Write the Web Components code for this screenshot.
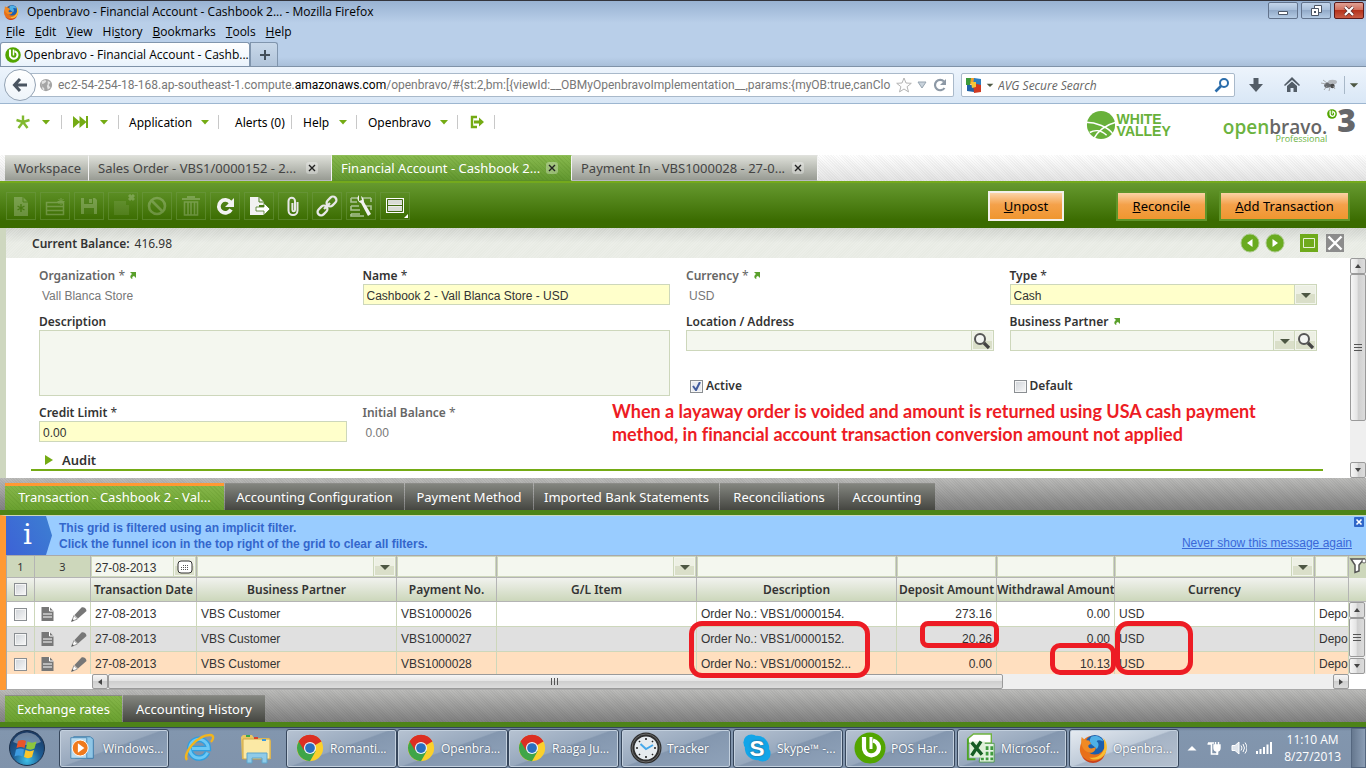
<!DOCTYPE html>
<html lang="en">
<head>
<meta charset="utf-8">
<title>Openbravo - Financial Account - Cashbook 2...</title>
<style>
html,body{margin:0;height:100%}
body{font-family:"Liberation Sans",Arial,sans-serif;font-size:12px;color:#333;background:#fff;
  --ui:"Noto Sans","Lucida Sans",sans-serif;--chrome:"Open Sans","Segoe UI",sans-serif;
  --line:#cdd7bb;--green:#74ab14}
</style>
</head>
<body>
<desktop-page></desktop-page>
<script>
function define(tag, css, html){
  customElements.define(tag, class extends HTMLElement{
    constructor(){
      super();
      const root=this.attachShadow({mode:'open'});
      const body=typeof html==='function'?html(this):html;
      root.innerHTML='<style>*{box-sizing:border-box}'+css+'</style>'+body;
    }
  });
}

/* ---------- icons ---------- */
const chromeLogo='<circle cx="16" cy="16" r="14" fill="#fbd02c"/><path d="M16 16 3.9 9A14 14 0 0 1 28.1 9Z" fill="#dc2f23"/><path d="M4 9A14 14 0 0 0 16 30l6-10.600-6-3.400Z" fill="#3fa548"/><path d="M16 9h12.200A14 14 0 0 0 3.900 9l6 10Z" fill="#dc2f23"/><circle cx="16" cy="16" r="6.500" fill="#eef3f8"/><circle cx="16" cy="16" r="5.200" fill="#2a6fc0"/>';
const foxLogo='<circle cx="16" cy="17" r="14" fill="#e8701a"/><path d="M4 24c5 7 17 9 24 0-2 5-7 8-12 8S6 29 4 24z" fill="#c9411c"/><circle cx="18" cy="12.500" r="10.500" fill="#1c5fae"/><path d="M14 4c5-2 11 0 13 5-3-1-6-2-7 0 3 2 2 6 0 8-2-3-6-4-7-7-1-2 0-4 1-6z" fill="#4fb0e6"/><path d="M4 4c1 2 4 4 8 4l2 4c-3 0-4 2-2 4 2 1 5 0 7-1 0 4-3 7-7 6C5 19 2 12 4 4z" fill="#f08a24"/><path d="M27 5c6 7 5 17-3 22-4 2-9 2-12-1 8 2 15-4 16-10 0-4 0-8-1-11z" fill="#f8bd33"/>';
const bravo='<circle cx="16" cy="16" r="15.500" fill="#52a500"/><path d="M10 5v10a7.500 7.500 0 1 0 9-6.500" fill="none" stroke="#fff" stroke-width="4.200"/><path d="M17 5v12" stroke="#fff" stroke-width="3" fill="none"/>';
const ICONS={
 fox:[32,foxLogo], chrome:[32,chromeLogo], bravo:[32,bravo],
 globe:[16,'<circle cx="8" cy="8" r="7" fill="#a5a5a5"/><path d="M3 4c2-1 4-2 5-1s-1 2-2 3-3 0-3 2 2 2 3 4-1 2-2 1M10 3l3 2-2 3 2 3-3 2-1-4 1-2z" fill="#e2e2e2"/>'],
 back:[16,'<path d="M8 2 2.500 8 8 14M3 8h12" fill="none" stroke="#4a5561" stroke-width="3"/>'],
 star:[16,'<path d="m8 1 2 5 5.300.300-4.200 3.400 1.400 5.200L8 12l-4.500 2.900 1.400-5.200L.700 6.300 6 6z" fill="#fdfdfd" stroke="#b3b3b3"/>'],
 tri:[10,'<path d="M1 2h8L5 8z" fill="#c9d3dc" stroke="#97a4b0"/>'],
 reload:[16,'<path d="M12.500 11a5.200 5.200 0 1 1-.5-6.500" fill="none" stroke="#8d99a6" stroke-width="2.200"/><path d="M14 2v6H8z" fill="#8d99a6"/>'],
 avg:[16,'<path d="M0 1h9l-1 6-8 1z" fill="#f0a030"/><path d="M0 1h5L4 8H0z" fill="#3c9a3a"/><path d="M8 1l7 1v6H7z" fill="#2d7fc0"/><path d="M1 8h7v7l-7-1z" fill="#1f62a8"/><path d="M7 6l8 2v7l-7 1z" fill="#cf3a22"/><path d="M5 5l5 0 0 5-4 1z" fill="#f6c838"/>'],
 search:[16,'<circle cx="10" cy="6" r="4" fill="none" stroke="#2b6dab" stroke-width="2"/><path d="m7 9-5.500 5.500" stroke="#2b6dab" stroke-width="2.600"/>'],
 down:[16,'<path d="M5.500 1h5v6H15l-7 8-7-8h4.500z" fill="#535d67"/>'],
 home:[16,'<path d="M8 0 0 8l1 1 7-6 7 6 1-1zM3 9l5-4.500L13 9v6H9.500v-4h-3v4H3z" fill="#535d67"/>'],
 fly:[18,'<ellipse cx="8" cy="9" rx="4" ry="2.600" fill="#66696d" transform="rotate(-20 8 9)"/><ellipse cx="12.500" cy="6" rx="4.500" ry="2.300" fill="#b4b8bd"/><circle cx="12.500" cy="10" r="2.200" fill="#4a4a4a"/><path d="M1 7l5 1M4 14l3-4M9 15l1-4M15 13l-2-3M3 4l4 3" stroke="#999" stroke-width=".8"/>'],
 spark:[16,'<path d="M8 8V1.500M8 8 1.500 6M8 8l6.500-2M8 8l-4.500 6M8 8l4.500 6" stroke="#82b930" stroke-width="2.400"/>'],
 ff:[16,'<path d="M0 2l7 6-7 6zM6.500 2l7 6-7 6zM13 2h2v12h-2z" fill="#74ab14"/>'],
 caret:[10,'<path d="M1 3h8L5 7.500z" fill="#74ab14"/>'],
 exit:[16,'<path d="M8 3H3v10h5" fill="none" stroke="#74ab14" stroke-width="2.400"/><path d="M5 6.500h5V3.500L15 8l-5 4.500v-3H5z" fill="#74ab14"/>'],
 doc:[24,'<path d="M5 3h9l5 5v14H5z" fill="#fff"/><path d="M14 3v5h5" fill="none" stroke="#4a7a1e"/><path d="M12 10v8M8.500 12l7 4M15.500 12l-7 4" stroke="#4a7a1e" stroke-width="1.400"/>'],
 rows:[24,'<path d="M3.500 8.500h17v12h-17zM3.500 12.500h17M3.500 16.500h17" fill="none" stroke="#fff" stroke-width="1.500"/><path d="M18 4v7M14.500 7.500h7M15.500 5l5 5M20.500 5l-5 5" stroke="#fff"/>'],
 save:[24,'<path d="M4 4h14l2 2v14H4z" fill="#fff"/><path d="M7 4h9v6H7zM7 14h10v6H7z" fill="#55812d"/><path d="M12 5h3v4h-3z" fill="#fff"/>'],
 savex:[24,'<path d="M3 7h12v4h3v10H3z" fill="#fff" opacity=".4"/><path d="m18 1 5 5M23 1l-5 5" stroke="#fff" stroke-width="3"/>'],
 no:[24,'<circle cx="12" cy="12" r="8" fill="none" stroke="#fff" stroke-width="2.600"/><path d="m6.500 6.500 11 11" stroke="#fff" stroke-width="2.600"/>'],
 trash:[24,'<path d="M3 5h18M9 5V3h6v2" fill="none" stroke="#fff" stroke-width="2"/><path d="M5.500 8h13v13h-13zM9 8v13M12 8v13M15.500 8v13" fill="none" stroke="#fff" stroke-width="1.600"/>'],
 refresh:[24,'<path d="M18 15.500a6.500 6.500 0 1 1-.5-7" fill="none" stroke="#f2f2f2" stroke-width="3.800"/><path d="M21 4v9h-9z" fill="#f2f2f2"/>'],
 export:[24,'<path d="M3 3h9l5 5v3h-5v6h5v4H3z" fill="#f2f2f2"/><path d="M12 3v5h5" fill="none" stroke="#4a7a1e"/><path d="M9 13h8V9l6 6-6 6v-4H9z" fill="#fff" stroke="#4a7a1e" stroke-width=".8"/>'],
 clip:[24,'<path d="M16.500 8v8.500a4.500 4.500 0 0 1-9 0V7a3.200 3.200 0 0 1 6.500 0v9a1.300 1.300 0 0 1-2.600 0V9" fill="none" stroke="#e8e8e8" stroke-width="2"/>'],
 link:[24,'<g fill="none" stroke="#e8e8e8" stroke-width="2.300"><rect x="2" y="13" width="11" height="7" rx="3.500" transform="rotate(-45 7.500 16.500)"/><rect x="11" y="4" width="11" height="7" rx="3.500" transform="rotate(-45 16.500 7.500)"/><path d="m9 15 6-6"/></g>'],
 wrench:[24,'<path d="M2 4h7M14 4h8M2 4v4h6M22 4v4M2 12h8M2 12v4h9M17 12h5v4M2 20h9M2 20v2h13" fill="none" stroke="#a9c294" stroke-width="1.600"/><path d="M10 1c-3 3-1 7 2 8l7 13 3-2-7-12c0-3-1-5-3-6l1 4-3 1z" fill="#f2f2f2"/>'],
 form:[24,'<path d="M3 4h18v15H3z" fill="#fff"/><path d="M5 6h14v4.500H5zM5 12.500h14V17H5z" fill="#d9dcd6"/><path d="M4.500 5.500h15v12h-15zM4.500 11.500h15" fill="none" stroke="#40690f"/>'],
 goto:[9,'<path d="M2 1h6v6L6 5C4 5.500 4 7 4.500 8 2 7.500 1.500 5 4 3z" fill="#5aa02c"/>'],
 lens:[20,'<circle cx="8" cy="8" r="5" fill="#f3f5f2" stroke="#555" stroke-width="2"/><path d="m12 12 5 5" stroke="#444" stroke-width="3.200"/>'],
 pick:[12,'<path d="M1 4h10L6 9z" fill="#4d5743"/>'],
 prev:[20,'<circle cx="10" cy="10" r="9" fill="#6aab20" stroke="#a9c98a"/><path d="M12.500 6v8L7 10z" fill="#fff"/>'],
 next:[20,'<circle cx="10" cy="10" r="9" fill="#6aab20" stroke="#a9c98a"/><path d="M7.500 6v8l5.500-4z" fill="#fff"/>'],
 max:[18,'<path d="M0 0h18v18H0z" fill="#6faa1b"/><path d="M3.500 4.500h11v9h-11z" fill="none" stroke="#e6f0d6"/>'],
 close:[18,'<path d="M0 0h18v18H0z" fill="#8c8c8c"/><path d="m2.500 2.500 13 13M15.500 2.500l-13 13" stroke="#fff" stroke-width="2.400"/>'],
 audit:[10,'<path d="M1 0l8 5-8 5z" fill="#74ab14"/>'],
 cal:[16,'<rect x="1" y="2" width="14" height="12" rx="3" fill="#fff" stroke="#333"/><path d="M4 10.500h8M4 8.500h8M6 6.500h6" stroke="#555" stroke-dasharray="1 1"/>'],
 funnel:[18,'<path d="M2 3h13l-5 6v6l-4 1.500V9z" fill="#fff" stroke="#555" stroke-width="1.500"/><circle cx="15" cy="5" r="2" fill="#fff" stroke="#666"/>'],
 page:[16,'<path d="M1.500 1h8l4 4v10h-12z" fill="#777"/><path d="M9.500 1v4h4M3 8h9M3 11h9" stroke="#fff" fill="none"/>'],
 pencil:[18,'<path d="M11.500 2.500c2-1 5 1 5 3.500L8 13.500 4.500 10z" fill="#777"/><path d="M4 10.500 1.500 16.500l6-2.500z" fill="#fff" stroke="#999"/><path d="m1.500 16.500 1-2.500 1.500 1.500z" fill="#555"/>'],
 media:[32,'<path d="M8 5h19v22H8z" fill="#63a8d4"/><path d="M6 4h18l3 3v20H8z" fill="#8fc6e6" stroke="#3f7ba8"/><path d="M3 5h17v22H3z" fill="#b9dcf0" stroke="#4c8ab5"/><circle cx="13" cy="16" r="8.500" fill="#ef7a1c" stroke="#fff"/><path d="M10.500 11v10l7-5z" fill="#fff"/>'],
 ie:[32,'<path d="M24.500 20.500a9.300 9.300 0 1 1 .8-4H9" fill="none" stroke="#2f9fe0" stroke-width="5.600"/><path d="M24.500 20.500a9.300 9.300 0 1 1 .8-4H9" fill="none" stroke="#6cc8f5" stroke-width="3"/><path d="M4 28C-1 22 14 3 27 3c5 0 3 5 1 7" fill="none" stroke="#f2b51d" stroke-width="2.400"/>'],
 folder:[32,'<path d="M1 5l2-2h9l2 3h15l2 3v18H2z" fill="#e9c763"/><path d="M3 7h27v20H3z" fill="#fbe9a5" stroke="#cfa646"/><path d="M6 3h4v2H6z" fill="#3aa84a"/><path d="M14 5h4v2h-4z" fill="#d9432c"/><path d="M22 7h4v2h-4z" fill="#3b9ae0"/><path d="M7 31V21h20v10h-5v-5H12v5z" fill="#8fcbe8" stroke="#5fa6cc"/>'],
 tracker:[32,'<circle cx="16" cy="16" r="15.500" fill="#2f2f2f"/><circle cx="16" cy="16" r="14" fill="none" stroke="#6a6a6a"/><circle cx="16" cy="16" r="11.500" fill="#e6ebef"/><path d="m10.500 12 5.500 5 7-4" fill="none" stroke="#46a8ea" stroke-width="2"/><path d="M16 6v2M16 24v2M6 16h2M24 16h2M9 9l1 1M22 22l1 1M9 23l1-1M22 10l1-1" stroke="#222" stroke-width="1.600"/>'],
 skype:[32,'<circle cx="10" cy="10" r="8.500" fill="#12a5e8"/><circle cx="22" cy="22" r="8.500" fill="#12a5e8"/><circle cx="16" cy="16" r="13" fill="#12a5e8"/><text x="16" y="24.500" font-family="Liberation Sans" font-weight="700" font-size="24" text-anchor="middle" fill="#fff">S</text>'],
 excel:[32,'<path d="M2 6l6-5h19v10H2z" fill="#fff" stroke="#6fb43f" stroke-width="1.500"/><path d="M2 6v22l8 0" fill="none" stroke="#4da528" stroke-width="2"/><path d="M18 11h12v20H14z" fill="#e6f3e3" stroke="#4d9a4a"/><path d="M21 14h3v4h-3zM26 14h3v4h-3zM21 20h3v4h-3zM26 20h3v4h-3zM16 26h3v3h-3zM21 26h3v3h-3zM26 26h3v3h-3z" fill="#3f9a3e"/><path d="M4 9h16v17H4z" fill="#dff0d8"/><path d="m6 10 11 13M16 9 6 24" stroke="#165c24" stroke-width="3.600"/>'],
 orb:[38,'<defs><radialGradient id="o" cx=".5" cy=".85" r=".8"><stop offset="0" stop-color="#3fc0e8"/><stop offset=".5" stop-color="#1d5c94"/><stop offset="1" stop-color="#1b3a63"/></radialGradient></defs><circle cx="19" cy="19" r="17.500" fill="url(#o)" stroke="#1b2f4a"/><path d="M5 13a15 15 0 0 1 28 0c-8 4-20 4-28 0z" fill="#fff" opacity=".35"/><path d="M10 12c3-1.500 6-1.500 8 0l-1.500 7c-2.500-1.500-5-1.500-8 0z" fill="#e9552a"/><path d="M19.500 12.500c3 1.500 6 1.500 9 0l-2 7c-2.500 1.500-5.500 1.500-8.500 0z" fill="#8cc63e"/><path d="M8 20.500c3-1.500 5.500-1.500 8 0l-1.500 7c-2.500-1.500-5.500-1.500-8 0z" fill="#3e9be0"/><path d="M17.500 21c3 1.500 6 1.500 8.500 0l-2 7c-2.500 1.500-5.500 1.500-8 0z" fill="#fbc62b"/>'],
 up:[10,'<path d="M5 3l4.500 4.500h-9z" fill="#fff"/>'],
 plug:[16,'<path d="M2 3h6M1.500 4h4v10h6v-3" fill="none" stroke="#fff" stroke-width="1.600"/><path d="M8 5h6v3c0 2-1 3-3 3s-3-1-3-3zM9.500 2v3M12.500 2v3M11 11v4" fill="#fff" stroke="#fff" stroke-width="1.400"/>'],
 vol:[16,'<path d="M1 5.500h3L8 2v12l-4-3.500H1z" fill="#dfe5ec" stroke="#fff"/><path d="M10 5.500q2 2.500 0 5M12 4q3 4 0 8M14 2.500q4 5.500 0 11" fill="none" stroke="#fff"/>'],
 signal:[16,'<path d="M0 11h2v3H0zM3.500 9h2v5h-2zM7 7h2v7H7zM10.500 4.500h2V14h-2zM14 2h2v12h-2z" fill="#fff"/>'],
 valley:[32,'<circle cx="16" cy="16" r="15" fill="#68b13a"/><path d="M0 13C10 13 24 18 29 26M8 31C13 22 20 16 32 13M4 24c5-3 12-3 18 3" fill="none" stroke="#fff" stroke-width="1.600"/>'],
 arL:[8,'<path d="M6 1v6L2 4z" fill="#444"/>'],arR:[8,'<path d="M2 1v6l4-3z" fill="#444"/>'],
 arU:[8,'<path d="M1 6h6L4 2z" fill="#444"/>'],arD:[8,'<path d="M1 2h6L4 6z" fill="#444"/>'],
 min:[14,'<path d="M2.500 7.500h9v3h-9z" fill="#fff" stroke="#4c5666"/>'],
 rest:[14,'<path d="M5.500 1.500h7v7h-7z" fill="#fff" stroke="#4c5666"/><path d="M2.500 4.500h7v7h-7z" fill="#fff" stroke="#4c5666"/><path d="M5 7h2v2H5z" fill="#4c5666"/>'],
 x:[14,'<path d="m3 3 8 8M11 3l-8 8" stroke="#5a2a2a" stroke-width="3.600"/><path d="m3 3 8 8M11 3l-8 8" stroke="#fff" stroke-width="2.200"/>'],
 xs:[8,'<path d="m1 1 6 6M7 1 1 7" stroke="#222" stroke-width="1.400"/>'],
 xb:[10,'<rect width="10" height="10" rx="1" fill="#2f66c8"/><path d="m2.500 2.500 5 5M7.500 2.500l-5 5" stroke="#fff" stroke-width="1.600"/>'],
 plus:[12,'<path d="M6 1v10M1 6h10" stroke="#444f5a" stroke-width="2"/>']
};
define('ui-icon',':host{display:inline-flex;flex:none}svg{display:block}',
 el=>{const [n,p]=ICONS[el.getAttribute('name')];const s=el.getAttribute('size')||n;
  return `<svg width="${s}" height="${s}" viewBox="0 0 ${n} ${n}" aria-hidden="true">${p}</svg>`;});
const ic=(n,s)=>`<ui-icon name="${n}"${s?` size="${s}"`:''}></ui-icon>`;

/* ---------- browser window ---------- */
define('win-chrome',`
:host{display:block;height:67px;font-family:var(--chrome);color:#000;border-top:1px solid #33343c;border-bottom:1px solid #7f92a8;
 background:linear-gradient(#98b2d2,#b9cfe9 22px,#b9cfe9 56px,#a9bfd9)}
header{display:flex;height:21px;align-items:center;padding-left:3px}
h1{font:12px/20px var(--chrome);margin:0 0 0 8px;flex:1}
.wb{display:flex;gap:3px;padding-right:2px;align-self:flex-start}
.wb button{width:30px;height:17px;padding:0;border:1px solid #62738c;border-radius:2px;margin-top:1px;display:flex;align-items:center;justify-content:center;
 background:linear-gradient(#c3d5ea,#a5bcd8 50%,#93abc9 50%,#b4cbe4)}
.wb .c{background:linear-gradient(#e0a195,#cf6a57 50%,#b5321b 50%,#c95c45);border-color:#5c1a1a}
nav{display:flex;gap:10px;padding-left:6px;height:20px}
nav a{font:12px/20px var(--chrome);color:#000;text-decoration:none}
.t{display:flex;height:24px}
.tab{display:flex;align-items:center;width:250px;gap:3px;padding:0 4px;background:linear-gradient(#fff,#e9f2fb);border:1px solid #8095ad;border-bottom:0;border-radius:3px 3px 0 0;overflow:hidden;white-space:nowrap}
.new{width:28px;padding:0 0 0 1px;display:flex;align-items:center;justify-content:center;border:1px solid #8095ad;border-bottom:0;border-radius:0 3px 0 0;background:linear-gradient(#c8d8e9,#b1c4da)}
`,`<header>${ic('fox',16)}<h1>Openbravo - Financial Account - Cashbook 2... - Mozilla Firefox</h1>
<div class="wb"><button aria-label="Minimize">${ic('min')}</button><button aria-label="Restore">${ic('rest')}</button><button class="c" aria-label="Close">${ic('x')}</button></div></header>
<nav><a href="#"><u>F</u>ile</a><a href="#"><u>E</u>dit</a><a href="#"><u>V</u>iew</a><a href="#">Hi<u>s</u>tory</a><a href="#"><u>B</u>ookmarks</a><a href="#"><u>T</u>ools</a><a href="#"><u>H</u>elp</a></nav>
<div class="t"><div class="tab">${ic('bravo',16)}<span>Openbravo - Financial Account - Cashb...</span></div><button class="new" aria-label="New tab">${ic('plus')}</button></div>`);

define('win-nav',`
:host{display:flex;height:37px;align-items:center;background:linear-gradient(#edf4fc,#d9e7f6);border-bottom:1px solid #9db6d0;padding:0 7px 0 4px;font:12px var(--chrome)}
.back{width:32px;height:32px;padding:0;border-radius:50%;border:1px solid #93a2b3;background:linear-gradient(#fff,#eef4fa);display:flex;align-items:center;justify-content:center;z-index:1;flex:none}
.url,.s{display:flex;align-items:center;height:24px;background:#fff;border:1px solid #a9b9ca;border-radius:2px}
.url{flex:1;margin-left:-7px;padding:0 5px 0 10px;gap:5px;min-width:0;color:#777;border-left:0}
.u{flex:1;overflow:hidden;white-space:nowrap;font:12px/20px Roboto,sans-serif}.u b{font-weight:400;color:#000}
.s{width:274px;margin:0 13px 0 7px;padding:0 4px;gap:4px;flex:none}
.s input{border:0;outline:0;flex:1;min-width:0;font:italic 12px var(--chrome);padding:0;background:none}
.s input::placeholder{color:#666;opacity:1}
.i{display:flex;gap:20px;align-items:center}
.v{width:1px;height:18px;background:#a8b8c8;margin:0 4px 0 6px}
`,`<button class="back" aria-label="Back">${ic('back')}</button>
<div class="url">${ic('globe',14)}<div class="u">ec2-54-254-18-168.ap-southeast-1.compute.<b>amazonaws.com</b>/openbravo/#{st:2,bm:[{viewId:__OBMyOpenbravoImplementation__,params:{myOB:true,canClo</div>${ic('star')}${ic('tri')}${ic('reload')}</div>
<div class="s">${ic('avg')}${ic('pick',8)}<input placeholder="AVG Secure Search" aria-label="Search">${ic('search')}</div>
<div class="i">${ic('down')}${ic('home')}${ic('fly')}</div><div class="v"></div>${ic('pick',10)}`);

/* ---------- application header ---------- */
define('ob-header',`
:host{display:flex;height:51px;background:#fff;padding-right:10px;color:#000;font:12px var(--ui)}
nav{display:flex;flex:1;align-self:flex-start;padding-top:11px}
a{display:flex;align-items:center;height:14px;color:#000;text-decoration:none;padding-left:11px;border-right:1px solid #c8c8c8;justify-content:space-between;padding-right:8px;white-space:nowrap}
.a{width:62px;padding-left:15px;padding-right:10px}.b{width:57px;padding-right:9px}.c{width:100px;padding-left:10px}.d{width:73px;padding-left:16px}.e{width:65px}.f{width:101px}.g{width:37px}
.w{display:flex;gap:1px;font:700 14px/12px "Liberation Sans",sans-serif;color:#68b13a;padding-top:6px;margin-right:52px}
.w p{margin:3px 0 0}
.o{display:grid;grid-template-columns:auto auto;align-content:start;color:#6cb33f}
.o .n{font:600 19px/22px "Open Sans",sans-serif;padding-top:12px}.o .n b{font-weight:600;color:#666}
.o .t{font:800 32px/32px "Open Sans",sans-serif;color:#66676a;display:flex;align-items:flex-start}
.t ui-icon{padding-top:5px}
.o .p{font:9px/10px "Open Sans",sans-serif;text-align:right;margin-top:-4px}
`,`<nav><a class="a" href="#" aria-label="Create new">${ic('spark')}${ic('caret')}</a><a class="b" href="#" aria-label="Quick launch">${ic('ff')}${ic('caret')}</a><a class="c" href="#">Application ${ic('caret')}</a><a class="d" href="#">Alerts (0)</a><a class="e" href="#">Help ${ic('caret')}</a><a class="f" href="#">Openbravo ${ic('caret')}</a><a class="g" href="#" aria-label="Log out">${ic('exit')}</a></nav>
<div class="w">${ic('valley',30)}<p>WHITE<br>VALLEY</p></div>
<div class="o"><div class="n">open<b>bravo.</b></div><div class="t">${ic('bravo',10)}3</div><div class="p">Professional</div></div>`);

define('ob-tab',`
:host{display:flex;align-items:center;height:26px;padding:0 13px 0 9px;font:13px var(--ui);color:#444;border-right:1px solid #f4f4f4;border-top:1px solid #e0e1dd;border-bottom:1px solid #b8b8c4;
 background:linear-gradient(#dddfd8,#989b93);white-space:nowrap;justify-content:space-between}
:host([active]){color:#fff;border-top-color:#8fbe5a;border-bottom-color:#5c8f2a;background:repeating-linear-gradient(45deg,#0000 0 2px,#3b6b0a1c 2px 3px),linear-gradient(#88b94e,#61962f)}
button{border:0;width:12px;height:12px;padding:0;display:flex;align-items:center;justify-content:center;border-radius:3px;background:#ffffff50}
`,el=>`<slot></slot>${el.hasAttribute('closable')?`<button aria-label="Close tab">${ic('xs')}</button>`:''}`);

define('ob-tabs',`:host{display:flex;height:26px;padding-left:5px;background:repeating-linear-gradient(45deg,#fff0 0 1px,#00000009 1px 2px),linear-gradient(#fff,#e4e4e4)}
.w{width:84px}.s{width:243px}.f{width:240px}.p{width:246px}`,
`<ob-tab class="w">Workspace</ob-tab><ob-tab class="s" closable>Sales Order - VBS1/0000152 - 2...</ob-tab><ob-tab class="f" active closable>Financial Account - Cashbook 2...</ob-tab><ob-tab class="p" closable>Payment In - VBS1000028 - 27-0...</ob-tab>`);

define('ob-toolbar',`
:host{display:flex;align-items:center;height:47px;border-top:2px solid #74a91c;padding:0 16px 0 6px;background:linear-gradient(#66992f,#3a6b00 85%)}
.i{display:flex;gap:4px;flex:1}
.i button{width:30px;height:28px;padding:0;border:1px solid #6f9a4880;background:none;display:flex;align-items:center;justify-content:center;position:relative}
.i button[disabled] ui-icon{opacity:.22}
.m::after{content:"";position:absolute;right:1px;bottom:1px;border:2px solid #fff;border-left-color:#0000;border-top-color:#0000}
.b{height:30px;border:2px solid #5f952a;font:13px var(--ui);color:#000;background:linear-gradient(#fbd3a6,#f4a14a 45%,#ef962f);padding:0;margin-left:12px}
.u{width:76px;border-color:#f3f0ea}.r{width:91px;margin-left:52px}.a{width:131px}
`,`<div class="i">${['doc','rows','save','savex','no','trash'].map(n=>`<button disabled aria-label="${n}">${ic(n)}</button>`).join('')}${['refresh','export','clip','link','wrench'].map(n=>`<button aria-label="${n}">${ic(n)}</button>`).join('')}<button class="m" aria-label="form">${ic('form')}</button></div>
<button class="b u"><u>U</u>npost</button><button class="b r"><u>R</u>econcile</button><button class="b a"><u>A</u>dd Transaction</button>`);

define('ob-status',`
:host{display:flex;align-items:center;height:30px;padding:0 22px 0 26px;font:12px var(--ui);gap:5px;background:repeating-linear-gradient(135deg,#0000 0 1px,#ffffff28 1px 2px),linear-gradient(#cfd2cd,#e8ebe4 50%)}
b{font-weight:600}span{flex:1}button{border:0;padding:0;background:none;display:flex}
.m{margin:0 3px 0 10px}
`,`<b>Current Balance:</b><span>416.98</span><button aria-label="Previous">${ic('prev')}</button><button aria-label="Next">${ic('next')}</button><button class="m" aria-label="Maximize">${ic('max')}</button><button aria-label="Close">${ic('close')}</button>`);

/* ---------- scrollbar ---------- */
define('ob-scroll',`
:host{display:flex;flex-direction:column;background:#efefef}
:host([dir-x]){flex-direction:row}
button,.t{border:1px solid #9a9a9a;border-radius:2px;background:linear-gradient(90deg,#f6f6f6,#e4e4e4 45%,#cfcfcf 50%,#dcdcdc);padding:0;display:flex;align-items:center;justify-content:center;flex:none;width:16px;height:16px}
:host([dir-x]) button,:host([dir-x]) .t{height:15px;background:linear-gradient(#f6f6f6,#e4e4e4 45%,#cfcfcf 50%,#dcdcdc)}
.t{height:auto;flex:var(--thumb)}.r{flex:var(--rest)}
:host([dir-x]) .t{width:auto}
.g{width:8px;height:7px;background:repeating-linear-gradient(#555 0 1px,#0000 1px 3px)}
:host([dir-x]) .g{background:repeating-linear-gradient(90deg,#555 0 1px,#0000 1px 3px)}
`,el=>{const x=el.hasAttribute('dir-x');return `<button aria-label="Back">${ic(x?'arL':'arU')}</button><div class="t"><div class="g"></div></div><div class="r"></div><button aria-label="Forward">${ic(x?'arR':'arD')}</button>`;});

/* ---------- form ---------- */
define('ob-field',`
:host{display:block}
label{display:block;font:600 12px/16px var(--ui);color:#333;white-space:nowrap}
label i{font-style:normal;font-weight:400}
:host([kind=read]) label{color:#666}
.b{display:flex;height:21px;border:1px solid var(--line);background:#f4f7ef}
:host([req]) .b{background:#ffffcb}
input,select,textarea{font:12px "Liberation Sans",sans-serif;color:#333;border:0;outline:0;background:none;padding:2px 3px 0;flex:1;min-width:0;appearance:none;resize:none;border-radius:0}
.b button{width:21px;border:1px solid #f2f5ec;outline:1px solid var(--line);background:linear-gradient(#edf0e4 50%,#dadfc9 50%);padding:0;display:flex;align-items:center;justify-content:center;flex:none}
:host([kind=area]) .b{height:66px}
output{display:block;font:12px/22px "Liberation Sans",sans-serif;color:#777;padding:1px 3px 0;height:21px}
`,el=>{const k=el.getAttribute('kind'),v=el.getAttribute('value')||'';
 const l=`<label for="f">${el.getAttribute('label')}${el.hasAttribute('star')?' <i>*</i>':''}${el.hasAttribute('go')?' '+ic('goto'):''}</label>`;
 if(k==='read')return l+`<output id="f">${v}</output>`;
 if(k==='area')return l+`<div class="b"><textarea id="f"></textarea></div>`;
 if(k==='select')return l+`<div class="b"><select id="f"><option>${v}</option></select><button aria-label="Open list">${ic('pick')}</button></div>`;
 const bt=(k==='combo'?`<button aria-label="Open list">${ic('pick')}</button>`:'')+(k==='combo'||k==='find'?`<button aria-label="Find">${ic('lens')}</button>`:'');
 return l+`<div class="b"><input id="f" value="${v}">${bt}</div>`;});

const CHECK=`input[type=checkbox]{appearance:none;width:13px;height:13px;margin:0;border:1px solid #8a8e92;background:linear-gradient(135deg,#cfd3d8,#f8f8f8);box-shadow:inset 0 0 0 1px #f6f6f6;flex:none}
input[type=checkbox]:checked{background:url("data:image/svg+xml,%3Csvg xmlns='http://www.w3.org/2000/svg' width='11' height='11'%3E%3Cpath d='M2 5l3 4 4-8' fill='none' stroke='%23405a9c' stroke-width='2'/%3E%3C/svg%3E"),#e8ebf0}`;
define('ob-check',`:host{display:flex;align-items:center;height:21px;margin-top:15px;padding-left:4px}${CHECK}
label{display:flex;gap:3px;font:600 12px/16px var(--ui)}input{margin-top:2px!important}`,
 el=>`<label><input type="checkbox"${el.hasAttribute('on')?' checked':''}><slot></slot></label>`);

define('ob-form',`
:host{display:flex;background:#fff;overflow:hidden;position:relative;min-height:0}
.m{flex:1;padding:10px 27px 0 25px}
.g{display:grid;grid-template-columns:repeat(4,1fr);gap:9px 16px;padding:0 6px 0 8px}
.w{grid-column:span 2;grid-row:span 2}
h2{display:flex;align-items:center;gap:8px;font:600 13px/18px var(--ui);margin:9px 0 0;padding-left:13px;border-bottom:2px solid var(--green)}
p{position:absolute;left:606px;top:142px;margin:0;font:700 18px/23px Lato,Calibri,sans-serif;font-variant-ligatures:none;color:#ed1c24;white-space:nowrap}
ob-scroll{width:16px;--thumb:157;--rest:44}
`,`<div class="m"><div class="g">
<ob-field kind="read" label="Organization" star go value="Vall Blanca Store"></ob-field>
<ob-field kind="text" label="Name" star req value="Cashbook 2 - Vall Blanca Store - USD"></ob-field>
<ob-field kind="read" label="Currency" star go value="USD"></ob-field>
<ob-field kind="select" label="Type" star req value="Cash"></ob-field>
<ob-field class="w" kind="area" label="Description"></ob-field>
<ob-field kind="find" label="Location / Address"></ob-field>
<ob-field kind="combo" label="Business Partner" go></ob-field>
<ob-check on>Active</ob-check><ob-check>Default</ob-check>
<ob-field kind="text" label="Credit Limit" star req value="0.00"></ob-field>
<ob-field kind="read" label="Initial Balance" star value="0.00"></ob-field>
</div><h2>${ic('audit')}Audit</h2></div><ob-scroll></ob-scroll>
<p>When a layaway order is voided and amount is returned using USA cash payment<br>method, in financial account transaction conversion amount not applied</p>`);

/* ---------- child tabs ---------- */
define('ob-subtabs',`
:host{display:flex;height:37px;padding:5px 0 0 5px;gap:1px;align-items:flex-start;border-bottom:5px solid #4d8318;
 background:repeating-linear-gradient(45deg,#0000 0 1px,#0000000c 1px 2px),linear-gradient(#bcbcba,#808080)}
::slotted(a){height:27px;font:13px/22px var(--ui);color:#fff;text-decoration:none;padding:2px 10px 0;text-align:center;white-space:nowrap;box-sizing:border-box;background:linear-gradient(#83857f,#454641);border-top:1px solid #8c8c88;flex:none}
::slotted(a.on){background:repeating-linear-gradient(45deg,#0000 0 2px,#3b6b0a1c 2px 3px),linear-gradient(#86b64a,#69a02f)}
::slotted(a.top){border-top:3px solid #ff9933;padding-top:0}
`,'<slot></slot>');

define('ob-message',`
:host{display:flex;height:40px;background:#9cf;border-top:1px solid var(--line);color:#3366cc;border-left:6px solid #ff9933}
.i{width:46px;background:linear-gradient(60deg,#3d62d6,#3c7fd2);clip-path:polygon(0 0,40px 0,100% 50%,40px 100%,0 100%);color:#fff;font:28px/38px "DejaVu Serif",serif;padding-left:17px}
p{flex:1;margin:0;padding:4px 0 0 7px;font-weight:700;line-height:16px}
.r{display:flex;flex-direction:column;align-items:flex-end;justify-content:space-between;padding:1px 2px 4px 0}
a{color:#3a68d8;line-height:15px;padding-right:12px}button{border:0;padding:0;background:none;display:flex}
`,`<div class="i">i</div><p>This grid is filtered using an implicit filter.<br>Click the funnel icon in the top right of the grid to clear all filters.</p><div class="r"><button aria-label="Close message">${ic('xb')}</button><a href="#">Never show this message again</a></div>`);

/* ---------- grid ---------- */
const rows=[['VBS1000026','Order No.: VBS1/0000154.','273.16','0.00'],['VBS1000027','Order No.: VBS1/0000152.','20.26','0.00'],['VBS1000028','Order No.: VBS1/0000152...','0.00','10.13']];
const flt=(k,v='')=>`<td><div class="f"><input aria-label="${k}" value="${v}">${k==='Transaction Date'?`<button aria-label="Calendar">${ic('cal')}</button>`:/Partner|Item|Currency/.test(k)?`<button aria-label="List">${ic('pick')}</button>`:''}</div></td>`;
define('ob-grid',`${CHECK}
:host{display:block;position:relative;border-left:6px solid #ff9933;background:#fff}
.box{border:1px solid #a9a9a9;border-right:0}
.top{display:flex;height:118px;overflow:hidden}
.tw{flex:1;overflow:hidden;min-width:0}
table{border-collapse:separate;border-spacing:0;table-layout:fixed;width:100%}
td,th{padding:0 4px;border-right:1px solid var(--line);border-bottom:1px solid var(--line);font-size:12px;text-align:left;overflow:hidden;white-space:nowrap;height:25px;font-weight:400}
tr.x td{padding:0;height:22px;border-color:#b4b4b4;background:var(--line);text-align:center;font-family:var(--ui);font-size:11px}
tr.h th{height:24px;padding:0 0 1px;text-align:center;font:600 12px var(--ui);border-color:#b4b4b4;background:linear-gradient(#f1f2ee,#ccd7bb)}
tr.b td{background:#e0e0e0}tr.c td{background:#ffdfbf}
.f{display:flex;height:21px;border:1px solid var(--line);background:#f4f7ef}
.f input{border:0;outline:0;background:none;min-width:0;flex:1;padding:2px 3px 0;font:12px "Liberation Sans",sans-serif;color:#333}
.f button{width:21px;border:1px solid #f2f5ec;outline:1px solid var(--line);background:linear-gradient(#edf0e4 50%,#dadfc9 50%);padding:0;display:flex;align-items:center;justify-content:center}
.n{text-align:right}.k input{display:block;margin:0 3px}tr.h input{margin:0 7px!important;display:block}
.e{display:flex;align-items:center;gap:7px;padding-left:1px}.e hr{width:1px;height:11px;border:0;background:#c5d3ae;margin:0}
.s{width:17px;display:flex;flex-direction:column;background:#fff}
.s div{height:22px;background:var(--line)}.s div+div{height:24px;background:linear-gradient(#f1f2ee,#ccd7bb);border-bottom:1px solid #b4b4b4}
.s ob-scroll{flex:1;--thumb:37;--rest:1}
.hs{display:flex;padding:0 17px 0 85px}.hs ob-scroll{flex:1;height:15px;--thumb:894;--rest:331}
.mark{position:absolute;border:5px solid #ed1c24;border-radius:13px}
.m1{left:683px;top:66px;width:181px;height:57px}.m2{left:914px;top:66px;width:79px;height:27px;border-radius:8px}
.m3{left:1044px;top:88px;width:66px;height:32px;border-radius:10px}.m4{left:1109px;top:66px;width:78px;height:54px}
`,`<div class="box"><div class="top"><div class="tw"><table>
<colgroup><col style="width:28px"><col style="width:56px"><col style="width:106px"><col style="width:200px"><col style="width:100px"><col style="width:200px"><col style="width:200px"><col style="width:100px"><col style="width:118px"><col style="width:200px"><col></colgroup>
<thead><tr class="x"><td>1</td><td>3</td>${flt('Transaction Date','27-08-2013')}${flt('Business Partner')}${flt('Payment No.')}${flt('G/L Item')}${flt('Description')}${flt('Deposit Amount')}${flt('Withdrawal Amount')}${flt('Currency')}${flt('Status')}</tr>
<tr class="h"><th><input type="checkbox" aria-label="Select all"></th><th></th><th>Transaction Date</th><th>Business Partner</th><th>Payment No.</th><th>G/L Item</th><th>Description</th><th>Deposit Amount</th><th>Withdrawal Amount</th><th>Currency</th><th></th></tr></thead>
<tbody>${rows.map((r,i)=>`<tr class="${'abc'[i]}"><td class="k"><input type="checkbox" aria-label="Select row"></td><td><div class="e">${ic('page')}<hr>${ic('pencil')}</div></td><td>27-08-2013</td><td>VBS Customer</td><td>${r[0]}</td><td></td><td>${r[1]}</td><td class="n">${r[2]}</td><td class="n">${r[3]}</td><td>USD</td><td>Depo</td></tr>`).join('')}</tbody></table></div>
<div class="s"><div>${ic('funnel')}</div><div></div><ob-scroll></ob-scroll></div></div>
<div class="hs"><ob-scroll dir-x></ob-scroll></div></div>
<div class="mark m1"></div><div class="mark m2"></div><div class="mark m3"></div><div class="mark m4"></div>`);

/* ---------- taskbar ---------- */
define('win-task',`
:host{display:block;width:110px;height:39px}
:host([icon=chrome]){width:111px}
button{width:100%;height:100%;display:flex;align-items:center;gap:5px;padding:0 0 0 8px;border:1px solid #37475c;border-radius:3px;box-shadow:inset 0 0 0 1px #c3d0de;font:12px var(--chrome);color:#fff;
 background:linear-gradient(160deg,#b7c3d2 0,#97a8bd 48%,#8497af 50%,#90a3ba);white-space:nowrap;overflow:hidden;text-shadow:0 0 2px #3a4a5e}
:host([on]) button{background:linear-gradient(160deg,#e6ebf1,#bfcbd9 48%,#a5b3c5 50%,#b4c0cf)}
`,el=>`<button>${ic(el.getAttribute('icon'),el.getAttribute('size')||30)}<span><slot></slot></span></button>`);
define('win-taskbar',`
:host{display:flex;height:41px;align-items:center;background:linear-gradient(#6c7f99,#8296ae 3px,#8093ab);border-top:1px solid #35465c;font:12px var(--chrome);color:#fff;flex:none}
.start{border:0;background:none;padding:0;margin:0 13px 0 8px;display:flex}
.l{width:117px;display:flex;justify-content:space-around;padding:0 2px}.l button{border:0;background:none;padding:0;display:flex}
.g{display:flex;margin-right:2px}
.s{display:flex;gap:2px;flex:1}
.tray{display:flex;gap:9px;align-items:center}
.clk{text-align:center;line-height:17px;margin:0 10px 0 12px}
.d{width:15px;align-self:stretch;border:1px solid #55677f;background:linear-gradient(90deg,#66788f,#8c9eb5);padding:0}
`,`<button class="start" aria-label="Start">${ic('orb')}</button><win-task icon="media">Windows...</win-task>
<div class="l"><button aria-label="Internet Explorer">${ic('ie')}</button><button aria-label="Explorer">${ic('folder')}</button></div>
<div class="g"><win-task icon="chrome">Romanti...</win-task><win-task icon="chrome">Openbra...</win-task><win-task icon="chrome">Raaga Ju...</win-task></div>
<div class="s"><win-task icon="tracker" size="32">Tracker</win-task><win-task icon="skype">Skype™ -...</win-task><win-task icon="bravo" size="32">POS Har...</win-task><win-task icon="excel">Microsof...</win-task><win-task icon="fox" on>Openbra...</win-task></div>
<div class="tray">${ic('up')}${ic('plug')}${ic('vol')}${ic('signal')}</div><div class="clk">11:10 AM<br>8/27/2013</div><button class="d" aria-label="Show desktop"></button>`);

define('desktop-page',`
:host{display:flex;flex-direction:column;min-height:100vh}
.mid{flex:1;display:flex;flex-direction:column;padding-left:6px;background:#ced7bf;min-height:0}
ob-form{flex:1}
.t1{width:219px}.t2{width:179px}.t3{width:128px}.t4{width:185px}.t5{width:118px}.t6{width:96px}.t7{width:117px}.t8{width:142px}
`,`<win-chrome></win-chrome><win-nav></win-nav><ob-header></ob-header><ob-tabs></ob-tabs><ob-toolbar></ob-toolbar>
<div class="mid"><ob-status></ob-status><ob-form></ob-form></div>
<ob-subtabs><a class="on top t1" href="#">Transaction - Cashbook 2 - Val...</a><a class="t2" href="#">Accounting Configuration</a><a class="t3" href="#">Payment Method</a><a class="t4" href="#">Imported Bank Statements</a><a class="t5" href="#">Reconciliations</a><a class="t6" href="#">Accounting</a></ob-subtabs>
<ob-message></ob-message><ob-grid></ob-grid>
<ob-subtabs><a class="on t7" href="#">Exchange rates</a><a class="t8" href="#">Accounting History</a></ob-subtabs>
<win-taskbar></win-taskbar>`);
</script>
</body>
</html>
